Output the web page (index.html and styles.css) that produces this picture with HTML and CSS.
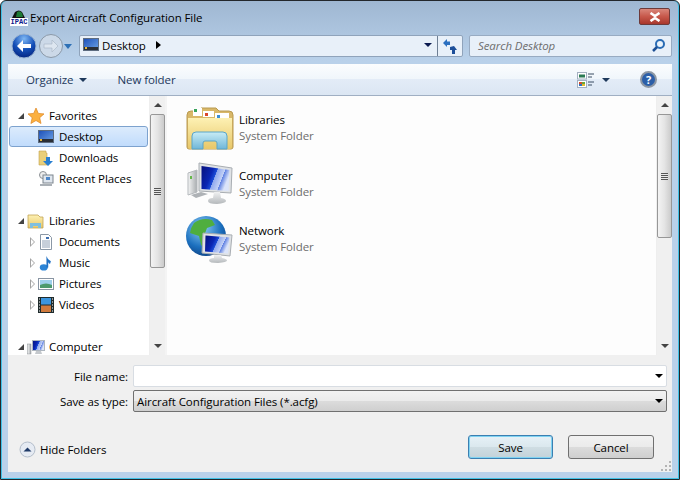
FILE: index.html
```html
<!DOCTYPE html>
<html lang="en">
<head>
    <meta charset="UTF-8">
    <title>Export Aircraft Configuration File</title>
    <link rel="stylesheet" href="styles.css">
</head>
<body>
    <svg class="defs" width="0" height="0">
        <defs>
            <linearGradient id="gFolder" x1="0" y1="0" x2="0" y2="1"><stop offset="0" stop-color="#fdf1b4"/><stop offset="1" stop-color="#e8c768"/></linearGradient>
            <linearGradient id="gGlass" x1="0" y1="0" x2="0" y2="1"><stop offset="0" stop-color="#c8ecf5"/><stop offset="1" stop-color="#6fb6d8"/></linearGradient>
            <linearGradient id="gScreen" x1="0" y1="0" x2="1" y2=".35"><stop offset="0" stop-color="#06107c"/><stop offset=".4" stop-color="#0a26b4"/><stop offset=".55" stop-color="#1d4ed8"/><stop offset=".56" stop-color="#8fa8ee"/><stop offset=".8" stop-color="#c4d2f6"/><stop offset=".81" stop-color="#5e80e2"/><stop offset="1" stop-color="#dbe4fa"/></linearGradient>
            <linearGradient id="gCase" x1="0" y1="0" x2="1" y2="0"><stop offset="0" stop-color="#f4f5f5"/><stop offset="1" stop-color="#a9adb0"/></linearGradient>
            <linearGradient id="gStand" x1="0" y1="0" x2="0" y2="1"><stop offset="0" stop-color="#f0f1f2"/><stop offset="1" stop-color="#b4b8bb"/></linearGradient>
            <radialGradient id="gBack" cx=".5" cy=".2" r=".9"><stop offset="0" stop-color="#7fb8f4"/><stop offset=".5" stop-color="#1550b8"/><stop offset=".85" stop-color="#062a88"/><stop offset="1" stop-color="#2f86e0"/></radialGradient>
            <radialGradient id="gGlobe" cx=".4" cy=".3" r=".8"><stop offset="0" stop-color="#8fd0f6"/><stop offset=".6" stop-color="#1b6fbe"/><stop offset="1" stop-color="#0c3a78"/></radialGradient>
            <linearGradient id="gDesk" x1="0" y1="0" x2="1" y2="1"><stop offset="0" stop-color="#1c4fb8"/><stop offset="1" stop-color="#6fa5e6"/></linearGradient>
            <symbol id="iDesktop" viewBox="0 0 16 14">
                <rect x=".5" y=".5" width="15" height="12" fill="url(#gDesk)" stroke="#5d6c80"/>
                <rect x="1" y="9" width="14" height="3" fill="#2b2f36"/>
                <rect x="2" y="9" width="2" height="2" fill="#e9b93c"/>
            </symbol>
        </defs>
    </svg>
    <div class="window">
        <header class="titlebar">
            <span class="app-icon">
                <svg width="17" height="9" viewBox="0 0 17 9">
                    <path d="M2 9 L5 3 Q9 0 12 3 L15 9Z" fill="#111"/>
                    <path d="M6 8 L7 3 Q10 1 12 4 L13 8Z" fill="#1d7a35"/>
                </svg>
                <span class="app-text">IPAC</span>
            </span>
            <span class="title">Export Aircraft Configuration File</span>
            <button class="close">
                <svg width="14" height="10" viewBox="0 0 14 10"><path d="M2.500 1 L7 4 L11.500 1 M2.500 9 L7 6 L11.500 9" stroke="#fff" stroke-width="2.600" fill="none"/></svg>
            </button>
        </header>

        <div class="navbar">
            <div class="nav-btns">
                <svg width="26" height="26" viewBox="0 0 26 26"><circle cx="13" cy="13" r="12" fill="url(#gBack)" stroke="#9ab3d0"/><path d="M6 13l6-6v4h8v4h-8v4z" fill="#fff"/></svg>
                <svg class="nav-fwd" width="26" height="26" viewBox="0 0 26 26"><circle cx="13" cy="13" r="11.500" fill="#ccd9e8" stroke="#8b99a8"/><path d="M20 13l-6-6v4H6v4h8v4z" fill="#dde6f0" stroke="#a5b3c2" stroke-width=".6"/></svg>
                <span class="nav-drop"></span>
            </div>
            <div class="address">
                <svg class="addr-icon" width="16" height="14"><use href="#iDesktop"/></svg>
                <span>Desktop</span>
                <span class="crumb-arrow"></span>
                <span class="addr-drop"></span>
                <span class="addr-refresh">
                    <svg width="16" height="17" viewBox="0 0 16 17"><path d="M1 5l4-4v2.500h3V7H5v2z" fill="#2a6fc0"/><path d="M8 9l4-1 3 4h-2v4h-3v-4H8z" fill="#1d4f9a"/></svg>
                </span>
            </div>
            <div class="search">
                <span>Search Desktop</span>
                <svg width="15" height="15" viewBox="0 0 15 15"><circle cx="9" cy="6" r="4" fill="#eaf3fb" stroke="#2a6cb4" stroke-width="2"/><path d="M6 9l-4 4" stroke="#1d4f94" stroke-width="2.500"/></svg>
            </div>
        </div>

        <div class="toolbar">
            <span class="tool">Organize <i class="caret"></i></span>
            <span class="tool">New folder</span>
            <span class="spacer"></span>
            <svg class="view-icon" width="18" height="16" viewBox="0 0 18 16">
                <rect x=".5" y=".5" width="9" height="6.500" fill="#fff" stroke="#a3b0c0"/><rect x="2" y="2.500" width="6" height="3" fill="#2b7a53"/>
                <rect x=".5" y="8.500" width="9" height="7" fill="#fff" stroke="#a3b0c0"/><rect x="2" y="10" width="3" height="2" fill="#d44c2b"/><rect x="5" y="10" width="3" height="2" fill="#68a83a"/><rect x="2" y="12" width="3" height="2" fill="#2f6fc2"/><rect x="5" y="12" width="3" height="2" fill="#e5b92e"/>
                <path d="M11 2h6M11 5h4M11 10h6M11 13h4" stroke="#3a4d63"/>
            </svg>
            <i class="caret view-caret"></i>
            <span class="help">?</span>
        </div>

        <div class="browser">
            <nav class="tree">
                <ul class="tree-list">
                    <li class="tree-row head"><i class="open"></i>
                        <svg viewBox="0 0 18 18"><path d="M9 1l2.300 5.400 5.700.5-4.300 3.800 1.300 5.800L9 13.500 3.900 16.500l1.300-5.800L1 6.900l5.700-.5z" fill="#fbb040" stroke="#dd8420" stroke-width=".7"/></svg>
                        Favorites</li>
                    <li class="tree-row sel">
                        <svg viewBox="0 0 16 16"><use href="#iDesktop" width="16" height="14" y="1"/></svg>
                        Desktop</li>
                    <li class="tree-row">
                        <svg viewBox="0 0 16 16"><path d="M1 1h7v2h1v12H1z" fill="#e9cf7a" stroke="#c2a24e" stroke-width=".6"/><path d="M8 7h4v4h3l-5 5-5-5h3z" fill="#2a7fd0"/></svg>
                        Downloads</li>
                    <li class="tree-row">
                        <svg viewBox="0 0 16 16"><circle cx="5" cy="4" r="3.500" fill="#eee" stroke="#8a8f94"/><rect x="5" y="4" width="10" height="8" fill="#dfe6ee" stroke="#7d858e"/><rect x="8" y="6" width="4" height="3" fill="#4d86c9"/><path d="M2 13h12v2H2z" fill="#aab0b6"/></svg>
                        Recent Places</li>
                    <li class="tree-gap"></li>
                    <li class="tree-row head"><i class="open"></i>
                        <svg viewBox="0 0 18 18"><path d="M1 5V3h10l2 2h3v11H1z" fill="url(#gFolder)" stroke="#c3a353" stroke-width=".8"/><path d="M3 11h11v5h-3v-2H6v2H3z" fill="#7fbfe0"/></svg>
                        Libraries</li>
                    <li class="tree-row"><i class="closed"></i>
                        <svg viewBox="0 0 16 16"><path d="M2.500.5h8l3 3v12h-11z" fill="#fff" stroke="#8b98a6"/><path d="M4 7h8M4 9h8M4 11h8M4 13h8" stroke="#8fa0b5"/><rect x="8" y="3" width="3" height="2" fill="#3e6fb0"/></svg>
                        Documents</li>
                    <li class="tree-row"><i class="closed"></i>
                        <svg viewBox="0 0 16 18"><ellipse cx="5.500" cy="14" rx="4.500" ry="3.500" fill="#2c84d6"/><path d="M8.500 14V1q1 4 5 6l-1 3q-2-1-2-2v6z" fill="#1f70c4"/></svg>
                        Music</li>
                    <li class="tree-row"><i class="closed"></i>
                        <svg viewBox="0 0 16 16"><rect x=".5" y="2.500" width="15" height="11" fill="#fff" stroke="#8995a3"/><rect x="2" y="4" width="12" height="5" fill="#9fd0ec"/><path d="M2 9q6-3 12 0v3H2z" fill="#4d9a6e"/></svg>
                        Pictures</li>
                    <li class="tree-row"><i class="closed"></i>
                        <svg viewBox="0 0 16 16"><rect width="16" height="16" fill="#1f2b2c"/><rect x="3" y="1" width="10" height="6.500" fill="#3b95de"/><rect x="3" y="8.500" width="10" height="6.500" fill="#d07a3c"/><path d="M1 2h1M1 5h1M1 8h1M1 11h1M1 14h1M14 2h1M14 5h1M14 8h1M14 11h1M14 14h1" stroke="#fff"/></svg>
                        Videos</li>
                    <li class="tree-gap"></li>
                    <li class="tree-row head"><i class="open"></i>
                        <svg viewBox="0 0 18 18"><rect x=".5" y="6" width="3.500" height="10" fill="url(#gCase)" stroke="#8a8f94" stroke-width=".5"/><rect x="5.500" y="2.500" width="12" height="10" fill="url(#gScreen)" stroke="#aeb6bf"/><path d="M9 13h5l1 3H8z" fill="#c4c8cc"/></svg>
                        Computer</li>
                </ul>
            </nav>
            <div class="scrollbar">
                <span class="sb-btn"><i class="sb-up"></i></span>
                <div class="sb-track"><div class="sb-thumb tree-thumb"><i class="grip"></i></div></div>
                <span class="sb-btn"><i class="sb-down"></i></span>
            </div>
            <div class="split"></div>
            <main class="files">
                <div class="file">
                    <svg width="48" height="46" viewBox="0 0 48 46">
                        <path d="M1 10Q1 6 5 6h8l2-3 15 0 3 3h10q4 0 4 4v32q0 2-2 2H3q-2 0-2-2z" fill="#d9b869" stroke="#b99a50"/>
                        <rect x="7" y="3" width="9" height="8" fill="#fff"/><rect x="8" y="4" width="3" height="3" fill="#3aa35b"/>
                        <rect x="17" y="6" width="11" height="6" fill="#fff"/><rect x="19" y="8" width="3" height="3" fill="#d9472b"/>
                        <rect x="29" y="8" width="14" height="6" fill="#fff"/><rect x="31" y="10" width="3" height="3" fill="#3a8fd6"/>
                        <path d="M2 13h44v29q0 2-2 2H4q-2 0-2-2z" fill="url(#gFolder)"/>
                        <path d="M6 44V31q0-4 4-4h27q4 0 4 4v13H31v-6q0-2-2-2H19q-2 0-2 2v6z" fill="url(#gGlass)" stroke="#5ba5c8"/>
                    </svg>
                    <div class="file-text"><div class="file-name">Libraries</div><div class="file-type">System Folder</div></div>
                </div>
                <div class="file">
                    <svg width="48" height="46" viewBox="0 0 48 46">
                        <path d="M2 13l9-3v22l-9 3z" fill="url(#gCase)" stroke="#b5b9bd"/>
                        <rect x="4" y="16" width="2" height="3" fill="#66b84a"/>
                        <path d="M5 35l10-3 7 2-12 4z" fill="#aeb2b6"/>
                        <path d="M13 3l33 5-1 25-32-2z" fill="#dfe2e5" stroke="#a8adb2"/>
                        <path d="M15.500 6l28 4-1 21-27-2z" fill="url(#gScreen)"/>
                        <path d="M28 32h6l1 6q5 1 5 3t-9 3q-9 0-9-3t5-3z" fill="url(#gStand)"/>
                    </svg>
                    <div class="file-text"><div class="file-name">Computer</div><div class="file-type">System Folder</div></div>
                </div>
                <div class="file">
                    <svg width="48" height="48" viewBox="0 0 48 48">
                        <circle cx="20" cy="21" r="20" fill="url(#gGlobe)"/>
                        <path d="M8 8q8-6 18-3l3 5-8 3-3 8 6 5-3 9-6-5-2-9-9-3q1-6 4-10z" fill="#4fae3f"/>
                        <path d="M17 18l29 2-2 21-28-3z" fill="#dfe2e5" stroke="#a8adb2"/>
                        <path d="M19.500 20.500l24 2-1.500 16-23-2z" fill="url(#gScreen)"/>
                        <path d="M28 40h7l1 3q5 1 5 2.500T32 48q-9 0-9-2.500t5-2.500z" fill="url(#gStand)"/>
                    </svg>
                    <div class="file-text"><div class="file-name">Network</div><div class="file-type">System Folder</div></div>
                </div>
            </main>
            <div class="scrollbar">
                <span class="sb-btn"><i class="sb-up"></i></span>
                <div class="sb-track"><div class="sb-thumb files-thumb"><i class="grip"></i></div></div>
                <span class="sb-btn"><i class="sb-down"></i></span>
            </div>
        </div>

        <div class="panel">
            <form class="fields">
                <label>File name:</label>
                <div class="input-box"><i class="combo-arrow"></i></div>
                <label>Save as type:</label>
                <div class="select-box">Aircraft Configuration Files (*.acfg)<i class="combo-arrow"></i></div>
            </form>
            <div class="actions">
                <span class="hide-folders">
                    <svg width="17" height="17" viewBox="0 0 17 17"><circle cx="8.500" cy="8.500" r="7.500" fill="#e6ebf3" stroke="#b3bdca"/><path d="M4.500 10.500l4-4 4 4z" fill="#1f3a68"/></svg>
                    Hide Folders
                </span>
                <span class="spacer"></span>
                <button class="btn default">Save</button>
                <button class="btn">Cancel</button>
            </div>
            <svg class="grip-corner" width="12" height="12" viewBox="0 0 12 12"><path d="M9 9h2v2H9zM5 9h2v2H5zM1 9h2v2H1zM9 5h2v2H9zM5 5h2v2H5zM9 1h2v2H9z" fill="#b4b4b4"/></svg>
        </div>
    </div>
</body>
</html>
```

FILE: styles.css
```css
* {
    box-sizing: border-box;
}
body {
    margin: 0;
    background: #fff;
    font-family: "Open Sans", "Noto Sans", sans-serif;
    font-size: 11.5px;
    letter-spacing: -.08px;
    color: #000;
}
button {
    font: inherit;
    letter-spacing: inherit;
}
.defs {
    position: absolute;
}
.spacer {
    flex: 1;
}
.window {
    display: flex;
    flex-direction: column;
    width: 680px;
    height: 480px;
    padding: 0 7px 7px;
    border: 1px solid #23272c;
    border-radius: 6px 6px 0 0;
    background: linear-gradient(#9fb7d2 0, #b9d1ea 60px);
    box-shadow: inset 1px 0 #3fc1e6, inset -1px 0 #3fc1e6, inset 0 -1px #3fc1e6;
}

/* title */
.titlebar {
    display: flex;
    align-items: center;
    height: 33px;
    padding: 0 2px;
    flex: none;
}
.app-icon {
    display: flex;
    flex-direction: column;
    width: 18px;
    flex: none;
}
.app-text {
    height: 8px;
    background: #fff;
    color: #10208c;
    font-family: "Liberation Mono", monospace;
    font-size: 7px;
    font-weight: bold;
    line-height: 8px;
    letter-spacing: 0;
    text-align: center;
}
.title {
    margin-left: 2px;
}
.close {
    margin-left: auto;
    margin-top: -2px;
    display: flex;
    align-items: center;
    justify-content: center;
    width: 31px;
    height: 17px;
    padding: 0;
    border: 1px solid #6d3a3a;
    border-radius: 2px;
    background: linear-gradient(#d9867a, #c7584b 50%, #a8372c);
}

/* navigation */
.navbar {
    display: flex;
    align-items: center;
    height: 24px;
    flex: none;
}
.nav-btns {
    display: flex;
    align-items: center;
    width: 71px;
    flex: none;
    padding-left: 3px;
}
.nav-btns svg {
    flex: none;
}
.nav-fwd {
    margin-left: 1px;
}
.nav-drop {
    margin-left: 0;
    border: 4px solid transparent;
    border-top: 5px solid #2d70b5;
    border-bottom: 0;
}
.address {
    display: flex;
    align-items: center;
    width: 384px;
    height: 22px;
    padding: 0 0 2px 3px;
    border: 1px solid #8fa3bb;
    border-radius: 2px;
    background: #e8f0f9;
}
.addr-icon {
    margin-right: 3px;
}
.crumb-arrow {
    margin-left: 10px;
    border: 4px solid transparent;
    border-left: 5px solid #000;
    border-right: 0;
}
.addr-drop {
    margin-left: auto;
    margin-right: 5px;
    border: 4px solid transparent;
    border-top: 4px solid #0b1a50;
    border-bottom: 0;
}
.addr-refresh {
    display: flex;
    align-items: center;
    justify-content: center;
    align-self: stretch;
    width: 25px;
    margin-bottom: -2px;
    border-left: 1px solid #6e7f94;
}
.search {
    display: flex;
    align-items: center;
    justify-content: space-between;
    width: 203px;
    height: 22px;
    margin-left: 6px;
    padding: 0 5px 2px 8px;
    border: 1px solid #98abc2;
    border-radius: 2px;
    background: #e8f0f9;
    color: #6d6d6d;
    font-style: italic;
}

/* toolbar */
.toolbar {
    display: flex;
    align-items: center;
    height: 32px;
    margin-top: 6px;
    padding-left: 18px;
    flex: none;
    border-bottom: 1px solid #a0afc3;
    background: linear-gradient(#fbfdfe, #f0f6fb 48%, #e3ecf7 50%, #dbe6f3);
    color: #1e395b;
}
.tool {
    display: flex;
    align-items: center;
    margin-right: 30px;
}
.caret {
    display: inline-block;
    margin-left: 6px;
    border: 4px solid transparent;
    border-top: 4px solid #1e395b;
    border-bottom: 0;
}
.view-caret {
    margin-left: 7px;
}
.view-icon {
    flex: none;
}
.help {
    display: flex;
    align-items: center;
    justify-content: center;
    width: 17px;
    height: 17px;
    margin: 0 15px 0 30px;
    flex: none;
    border: 2px solid #8d97a3;
    border-radius: 50%;
    background: #2c5fa8;
    color: #fff;
    font-size: 11px;
    font-weight: bold;
    line-height: 13px;
}

/* tree and list */
.browser {
    display: flex;
    height: 259px;
    flex: none;
    background: #fff;
}
.tree {
    width: 141px;
    overflow: hidden;
    flex: none;
    background: #fff;
}
.tree-list {
    margin: 0;
    padding: 9px 0 0;
    list-style: none;
}
.tree-row {
    position: relative;
    display: flex;
    align-items: center;
    gap: 5px;
    height: 21px;
    padding-left: 30px;
}
.tree-row svg {
    width: 16px;
    height: 16px;
    flex: none;
}
.tree-row.head {
    gap: 4px;
    padding-left: 19px;
}
.tree-row.head svg {
    width: 18px;
    height: 18px;
}
.tree-row.sel {
    margin: 0 1px;
    padding-left: 28px;
    border: 1px solid #7da2ce;
    border-radius: 3px;
    background: linear-gradient(#dcebfc, #c1dcfc);
}
.tree-gap {
    height: 21px;
}
.open {
    position: absolute;
    left: 10px;
    top: 8px;
    border-bottom: 6px solid #444;
    border-left: 6px solid transparent;
}
.closed {
    position: absolute;
    left: 22px;
    top: 6px;
    border: 5px solid transparent;
    border-left: 5px solid #a3a3a3;
    border-right: 0;
}
.closed::after {
    content: '';
    position: absolute;
    left: -4px;
    top: -3px;
    border: 3px solid transparent;
    border-left: 3px solid #fff;
    border-right: 0;
}
.scrollbar {
    display: flex;
    flex-direction: column;
    width: 16px;
    flex: none;
    border-left: 1px solid #eee;
    background: #f0f0f0;
}
.sb-btn {
    display: flex;
    align-items: center;
    justify-content: center;
    height: 18px;
    flex: none;
}
.sb-up, .sb-down {
    border: 4px solid transparent;
}
.sb-up {
    border-top: 0;
    border-bottom: 4px solid #444;
}
.sb-down {
    border-bottom: 0;
    border-top: 4px solid #444;
}
.sb-track {
    flex: 1;
}
.sb-thumb {
    display: flex;
    align-items: center;
    justify-content: center;
    border: 1px solid #979797;
    border-radius: 2px;
    background: linear-gradient(90deg, #f3f3f3, #e4e4e4 50%, #cbcbcb);
}
.tree-thumb {
    height: 154px;
}
.files-thumb {
    height: 124px;
}
.grip {
    width: 7px;
    height: 7px;
    background: repeating-linear-gradient(#555 0 1px, #e8e8e8 1px 2px);
}
.split {
    width: 2px;
    flex: none;
    background: #f4f4f4;
}
.files {
    flex: 1;
    padding: 4px 0 0 19px;
    background: #fdfdfd;
}
.file {
    display: flex;
    align-items: center;
    gap: 5px;
    height: 55.5px;
}
.file svg {
    flex: none;
}
.file-name {
    line-height: 17px;
}
.file-type {
    color: #6d6d6d;
    line-height: 16px;
}

/* bottom */
.panel {
    position: relative;
    display: flex;
    flex-direction: column;
    flex: 1;
    padding: 10px 5px 0 0;
    background: #f0f0f0;
}
.fields {
    display: grid;
    grid-template-columns: 120px 1fr;
    grid-auto-rows: 22px;
    row-gap: 3px;
    align-items: center;
    column-gap: 5px;
}
.fields label {
    text-align: right;
}
.input-box, .select-box {
    position: relative;
    height: 22px;
    border-radius: 2px;
}
.input-box {
    border: 1px solid #d8dde3;
    background: #fff;
}
.select-box {
    display: flex;
    align-items: center;
    padding-left: 3px;
    border: 1px solid #707070;
    background: linear-gradient(#f2f2f2, #ebebeb 48%, #dcdcdc 50%, #cfcfcf);
}
.combo-arrow {
    position: absolute;
    right: 3px;
    top: 8px;
    border: 4px solid transparent;
    border-top: 4px solid #000;
    border-bottom: 0;
}
.actions {
    display: flex;
    align-items: center;
    margin-top: 23px;
    padding: 0 13px 0 11px;
}
.hide-folders {
    display: flex;
    align-items: center;
    gap: 4px;
    margin-top: 4px;
}
.btn {
    width: 86px;
    height: 24px;
    margin-left: 15px;
    padding: 0;
    border: 1px solid #707070;
    border-radius: 3px;
    background: linear-gradient(#f2f2f2, #ebebeb 48%, #dcdcdc 50%, #cfcfcf);
}
.btn.default {
    width: 85px;
    border-color: #3c7fb1;
    box-shadow: inset 0 0 0 1px #7fd3f2;
    background: linear-gradient(#e6f1f7, #dbe8ee 48%, #cfdde3 50%, #c3d2d9);
}
.grip-corner {
    position: absolute;
    right: 0;
    bottom: 0;
}
```
